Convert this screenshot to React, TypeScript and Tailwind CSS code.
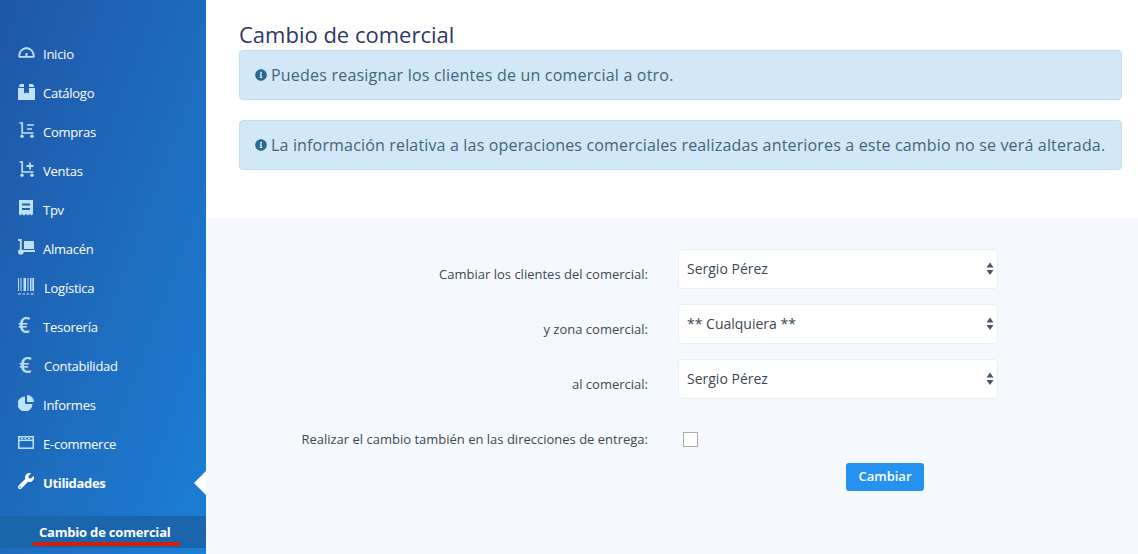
import React from "react";
import { FaWrench, FaInfoCircle } from "react-icons/fa";

const C = "#bfe2fb";

const Gauge = () => (
  <svg width="17" height="11" viewBox="0 0 17 11" fill="none">
    <path d="M1.300 9.900 A7.600 8 0 0 1 8.500 1 A7.600 8 0 0 1 15.700 9.900 Z" stroke={C} strokeWidth="1.800" strokeLinejoin="round" />
    <path d="M8.500 9.500 V6" stroke={C} strokeWidth="2" />
  </svg>
);
const Box = () => (
  <svg width="17" height="17" viewBox="0 0 17 17">
    <path d="M0 5H6V10.500L8.500 9.500L11 10.500V5H17V17H0Z" fill={C} />
    <path d="M2 1H6V4H0.700ZM11 1H15L16.300 4H11Z" fill={C} />
  </svg>
);
const CartBase = ({ children }: { children: React.ReactNode }) => (
  <svg width="16" height="16" viewBox="0 0 16 16" fill="none">
    <path d="M0.500 1H3.200V11H14.500" stroke={C} strokeWidth="1.700" />
    <circle cx="3" cy="14.300" r="1.700" fill={C} />
    <circle cx="13" cy="14.300" r="1.700" fill={C} />
    {children}
  </svg>
);
const Receipt = () => (
  <svg width="14" height="16" viewBox="0 0 14 16">
    <path d="M0 0H14V14L12.500 15.500L11 14L9 15.500L7 14L5 15.500L3 14L1.500 15.500L0 14Z" fill={C} />
    <path d="M3 3.500H11V5.500H3ZM3 8H11V10H3Z" fill="#1f63b2" />
  </svg>
);
const Dolly = () => (
  <svg width="17" height="16" viewBox="0 0 17 16" fill="none">
    <path d="M0 1H2.800V12H17" stroke={C} strokeWidth="1.800" />
    <circle cx="2.800" cy="13" r="2.800" fill={C} />
    <rect x="6" y="2" width="10" height="8" rx="0.500" fill={C} />
  </svg>
);
const Barcode = () => (
  <svg width="16" height="17" viewBox="0 0 16 17">
    <path d="M0 0H1V13H0ZM2.500 0H3.500V13H2.500ZM5.500 0H8V13H5.500ZM9.500 0H10.500V13H9.500ZM12 0H16V13H12Z" fill={C} />
    <path d="M13.500 0H14.300V13H13.500Z" fill="#1f66b6" />
    <path d="M0 15.500H3V16.500H0ZM4.500 15.500H7V16.500H4.500ZM8.500 15.500H11V16.500H8.500ZM12.500 15.500H16V16.500H12.500Z" fill={C} />
  </svg>
);
const Pie = () => (
  <svg width="16" height="16" viewBox="0 0 16 16">
    <path d="M7 1.500V9H14.500A7.500 7.500 0 1 1 7 1.500Z" fill={C} />
    <path d="M9 0A7 7 0 0 1 16 7H9Z" fill={C} />
  </svg>
);
const Browser = () => (
  <svg width="16" height="13" viewBox="0 0 16 13" fill="none">
    <rect x="0.750" y="0.750" width="14.500" height="11.500" stroke={C} strokeWidth="1.500" />
    <path d="M1 4.300H15" stroke={C} strokeWidth="1.500" />
    <path d="M3 2.500H5M6.500 2.500H8.500M10 2.500H12" stroke={C} strokeWidth="1" />
  </svg>
);
const Euro = ({ cls }: { cls: string }) => (
  <span className={"block leading-none font-semibold text-[#bfe2fb] " + cls}>€</span>
);

const items: { label: string; icon: React.ReactNode; textCls?: string }[] = [
  { label: "Inicio", icon: <Gauge /> },
  { label: "Catálogo", icon: <Box /> },
  { label: "Compras", icon: <span className="ml-[1px] block"><CartBase><path d="M8 3H15M8 7H13" stroke={C} strokeWidth="1.700" /></CartBase></span> },
  { label: "Ventas", icon: <span className="ml-[1px] block"><CartBase><path d="M7.500 5H14.500M11 1.500V8.500" stroke={C} strokeWidth="1.800" /></CartBase></span> },
  { label: "Tpv", icon: <span className="ml-[1px] block"><Receipt /></span> },
  { label: "Almacén", icon: <Dolly /> },
  { label: "Logística", icon: <Barcode />, textCls: "ml-[1px]" },
  { label: "Tesorería", icon: <Euro cls="text-[21px]" /> },
  { label: "Contabilidad", icon: <span className="ml-[1px] block"><Euro cls="text-[22px]" /></span>, textCls: "ml-[1px]" },
  { label: "Informes", icon: <Pie /> },
  { label: "E-commerce", icon: <Browser /> },
];

const Select = ({ value }: { value: string }) => (
  <div className="relative w-[320px]">
    <select
      defaultValue={value}
      className="block h-[40px] w-full appearance-none rounded-[4px] border border-[#eaeff5] bg-white pb-[2px] pl-[8px] pr-6 text-[14px] text-[#3d4852] outline-none"
    >
      <option>{value}</option>
    </select>
    <svg className="absolute right-[4px] top-[13px]" width="8" height="14" viewBox="0 0 8 14">
      <path d="M4 0.500L7.500 5.500H0.500Z M4 13L0.500 8H7.500Z" fill="#4a5663" />
    </svg>
  </div>
);

const Row = ({ label, children }: { label: string; children: React.ReactNode }) => (
  <div className="flex items-center">
    <label className="mt-[12px] w-[442px] text-right text-[13px] text-[#3d4852]">{label}</label>
    <div className="ml-[30px]">{children}</div>
  </div>
);

const Alert = ({ text, track }: { text: string; track: string }) => (
  <div className={"flex h-[50px] items-center rounded-[4px] border border-[#bfe0f0] bg-[#d2e8f6] pl-[15px] text-[16px] text-[#41657e] " + track}>
    <FaInfoCircle size={12} color="#2b6a8e" className="mr-[4px] shrink-0" />
    <span>{text}</span>
  </div>
);

export default function App() {
  return (
    <div className="flex h-[554px] w-[1138px] overflow-hidden bg-white font-['Open_Sans',sans-serif]">
      <aside className="flex h-full w-[206px] shrink-0 flex-col bg-gradient-to-br from-[#1f56a6] to-[#1a80d5] pt-[34.500px] text-[13px] tracking-[-0.25px] text-white">
        {items.map((it) => (
          <div key={it.label} className="flex h-[39px] items-center pl-[18px]">
            <span className="mb-[4px] flex w-[25px] shrink-0 items-center">{it.icon}</span>
            <span className={"mt-[2px] " + (it.textCls ?? "")}>{it.label}</span>
          </div>
        ))}
        <div className="relative flex h-[39px] items-center pl-[18px] font-bold">
          <span className="mb-[4px] flex w-[25px] shrink-0 items-center"><FaWrench size={16} color="#ffffff" /></span>
          <span className="mt-[1px] tracking-[-0.35px]">Utilidades</span>
          <span className="absolute right-0 top-[7px] h-0 w-0 border-y-[12px] border-r-[12px] border-y-transparent border-r-white" />
        </div>
        <div className="mt-[13.500px] flex h-[32px] items-start bg-[#1a65ab] pl-[33px]">
          <span className="mt-[7.500px] w-[147px] border-b-[4px] border-[#d2200f] pb-[1.500px] pl-[6px] text-[13px] leading-[17px] font-bold tracking-[-0.2px]">Cambio de comercial</span>
        </div>
      </aside>
      <main className="flex min-w-0 flex-1 flex-col">
        <div className="h-[218px] shrink-0 pl-[33px] pr-[16px] pt-[20px]">
          <h1 className="text-[22px] leading-[28px] text-[#2d3766]">Cambio de comercial</h1>
          <div className="mt-[2px] flex flex-col gap-[20px]">
            <Alert track="tracking-[0.21px]" text="Puedes reasignar los clientes de un comercial a otro." />
            <Alert track="tracking-[0.165px]" text="La información relativa a las operaciones comerciales realizadas anteriores a este cambio no se verá alterada." />
          </div>
        </div>
        <form className="flex flex-1 flex-col gap-[15px] bg-[#f5f9fe] pt-[31px]">
          <Row label="Cambiar los clientes del comercial:"><Select value="Sergio Pérez" /></Row>
          <Row label="y zona comercial:"><Select value="** Cualquiera **" /></Row>
          <Row label="al comercial:"><Select value="Sergio Pérez" /></Row>
          <div className="mt-[16px] flex items-center">
            <label className="w-[442px] text-right text-[13px] text-[#3d4852]">Realizar el cambio también en las direcciones de entrega:</label>
            <span className="ml-[35px] block h-[15px] w-[15px] border border-[#a9a9a9] bg-white" />
          </div>
          <div className="-mt-[2px] flex pl-[640px]">
            <button type="button" className="h-[28px] w-[78px] rounded-[3px] bg-[#2492ee] pt-[1px] text-[13px] font-semibold text-white">Cambiar</button>
          </div>
        </form>
      </main>
    </div>
  );
}
